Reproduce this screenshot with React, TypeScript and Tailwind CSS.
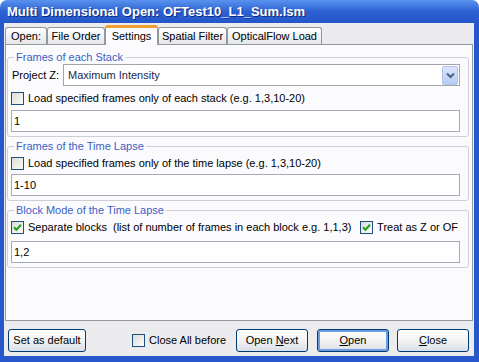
import React from 'react';

const Check = ({ checked = false }: { checked?: boolean }) => (
  <span className="flex h-[13px] w-[13px] shrink-0 items-center justify-center border border-[#1c5180] bg-linear-to-br from-[#dcdcd7] to-[#fbfbf9]">
    {checked && (
      <svg width="9" height="9" viewBox="0 0 9 9">
        <path d="M1 4.3 L3.4 6.8 L8 1.8" stroke="#21a121" strokeWidth="2" fill="none" />
      </svg>
    )}
  </span>
);

const Field = ({ value, className = '' }: { value: string; className?: string }) => (
  <div className={`h-[22px] border border-[#a5acb5] bg-white pl-[2px] text-[11px] leading-[20px] text-black ${className}`}>
    {value}
  </div>
);

const Btn = ({
  children,
  isDefault = false,
  className = '',
}: {
  children: React.ReactNode;
  isDefault?: boolean;
  className?: string;
}) => (
  <button
    className={`flex h-[23px] w-[72px] items-center justify-center rounded-[3px] border border-[#003c74] bg-linear-to-b from-white via-[#f3f3f1] to-[#d9dee9] text-[11px] text-black ${
      isDefault ? 'shadow-[inset_0_0_0_2px_#6f9be0]' : ''
    } ${className}`}
  >
    {children}
  </button>
);

const Group = ({ title, children, className = '' }: { title: string; children: React.ReactNode; className?: string }) => (
  <fieldset className={`ml-[1px] mr-[3px] rounded-[3px] border border-[#d0d0d4] pb-[4px] pl-[3px] pr-[8px] ${className}`}>
    <legend className="ml-[3px] px-[2px] text-[11px] leading-[13px] text-[#3d5fc4]">{title}</legend>
    {children}
  </fieldset>
);

const tabs = [
  { label: 'Open:', w: 'w-[42px]' },
  { label: 'File Order', w: 'w-[58px]' },
  { label: 'Settings', w: 'w-[53px]', active: true },
  { label: 'Spatial Filter', w: 'w-[69px]' },
  { label: 'OpticalFlow Load', w: 'w-[95px]' },
];

export default function App() {
  return (
    <div className="flex h-[362px] w-[479px] flex-col bg-white font-['Liberation_Sans',Arial,sans-serif] text-black">
      {/* title bar */}
      <div className="flex h-[23px] shrink-0 items-center rounded-t-[7px] bg-linear-to-b from-[#5a93ee] via-[#2c61d2] to-[#2456c8] pl-[7px]">
        <span className="text-[13px] font-bold text-white [text-shadow:1px_1px_0_#0d2a80]">
          Multi Dimensional Open: OFTest10_L1_Sum.lsm
        </span>
      </div>

      <div className="flex flex-1 flex-col border-b-[6px] border-l-4 border-r-[5px] border-[#2658cc] bg-[#ecebee]">
        {/* tabs */}
        <div className="mt-[2px] flex h-[19px] items-end pl-[1px]">
          {tabs.map((t) =>
            t.active ? (
              <div
                key={t.label}
                className={`${t.w} relative z-10 -mb-px flex h-[20px] items-center justify-center rounded-t-[3px] border-x border-t-[3px] border-x-[#919b9c] border-t-[#f0a030] bg-[#fcfcfe] pb-[1px] text-[11px]`}
              >
                {t.label}
              </div>
            ) : (
              <div
                key={t.label}
                className={`${t.w} flex h-[17px] items-center justify-center rounded-t-[3px] border-x border-t border-[#919b9c] bg-linear-to-b from-white to-[#e6e6ea] text-[11px]`}
              >
                {t.label}
              </div>
            )
          )}
        </div>

        {/* panel */}
        <div className="ml-[1px] mr-[1px] flex h-[277px] flex-col border border-[#919b9c] bg-[#fbfbfd]">
          <Group title="Frames of each Stack" className="mt-[6px]">
            <div className="flex h-[22px] items-center">
              <span className="ml-[1px] w-[51px] text-[11px]">Project Z:</span>
              <div className="flex h-[22px] flex-1 items-center border border-[#a5a5a8] bg-white pl-[4px] pr-[1px]">
                <span className="flex-1 text-[11px] text-[#1e1e50]">Maximum Intensity</span>
                <span className="flex h-[19px] w-[16px] items-center justify-center rounded-[2px] border border-[#b1c3e8] bg-linear-to-b from-[#dbe6fd] to-[#b7cbf6]">
                  <svg width="9" height="7" viewBox="0 0 9 7">
                    <path d="M1 1.5 L4.5 5 L8 1.5" stroke="#4d6185" strokeWidth="2" fill="none" />
                  </svg>
                </span>
              </div>
            </div>
            <div className="mt-[6px] flex h-[13px] items-center gap-[4px] text-[11px]">
              <Check />
              <span>Load specified frames only of each stack (e.g. 1,3,10-20)</span>
            </div>
            <Field value="1" className="mt-[5px]" />
          </Group>

          <Group title="Frames of the Time Lapse" className="mt-[3px]">
            <div className="mt-[4px] flex h-[13px] items-center gap-[4px] text-[11px]">
              <Check />
              <span>Load specified frames only of the time lapse (e.g. 1,3,10-20)</span>
            </div>
            <Field value="1-10" className="mt-[4px]" />
          </Group>

          <Group title="Block Mode of the Time Lapse" className="mt-[3px]">
            <div className="mt-[4px] flex h-[13px] items-center text-[11px]">
              <Check checked />
              <span className="ml-[4px] flex-1">Separate blocks&nbsp; (list of number of frames in each block e.g. 1,1,3)</span>
              <Check checked />
              <span className="ml-[4px] mr-[2px]">Treat as Z or OF</span>
            </div>
            <Field value="1,2" className="mt-[7px]" />
          </Group>
        </div>

        {/* bottom buttons */}
        <div className="mt-[8px] flex items-center pl-[4px] pr-[5px]">
          <Btn className="w-[78px]">Set as default</Btn>
          <div className="ml-[46px] flex items-center gap-[4px] text-[11px]">
            <Check />
            <span>Close All before</span>
          </div>
          <Btn className="ml-auto">
            <span>
              Open <u>N</u>ext
            </span>
          </Btn>
          <Btn isDefault className="ml-[9px]">
            <span>
              <u>O</u>pen
            </span>
          </Btn>
          <Btn className="ml-[8px]">
            <span>
              <u>C</u>lose
            </span>
          </Btn>
        </div>
      </div>
    </div>
  );
}
